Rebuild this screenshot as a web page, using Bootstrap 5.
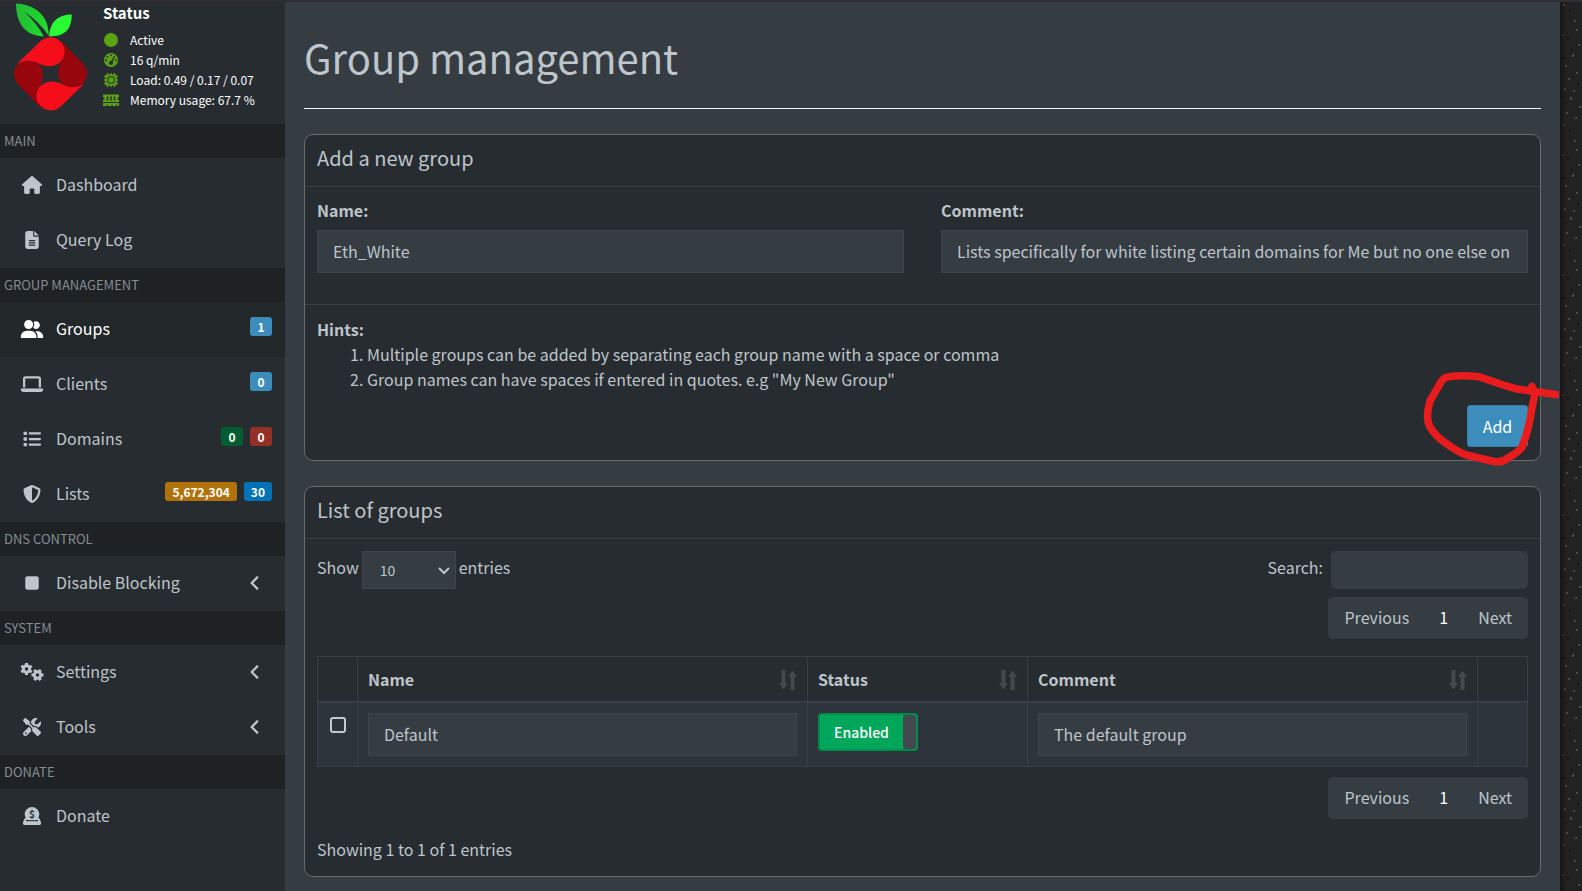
<!DOCTYPE html>
<html lang="en">
<head>
<meta charset="utf-8">
<meta name="viewport" content="width=device-width, initial-scale=1">
<title>Group management</title>
<link href="https://cdn.jsdelivr.net/npm/bootstrap@5.3.0/dist/css/bootstrap.min.css" rel="stylesheet">
<style>
:root{--panel:#272c30;--page:#353c42;--ink:#bec5cb;--line:#393f44;--blue:#3c8dbc}
body{font-family:"Noto Sans CJK SC","Source Sans Pro",sans-serif;font-size:16px;line-height:25px;color:var(--ink);background:var(--page);border-top:2px solid #2f2f33}
a{color:inherit;text-decoration:none}
.shell{min-height:calc(100vh - 2px)}
.side{width:285px;flex:none;background:var(--panel)}
.texture{width:22px;flex:none;background-color:#222;box-shadow:inset 5px 0 5px -3px #111;
background-image:url("data:image/svg+xml,%3Csvg xmlns='http://www.w3.org/2000/svg' width='22' height='120'%3E%3Cg fill='%234a4a4a'%3E%3Cpath d='M3 2h2v2h-2zM14 18h2v2h-2zM16 27h2v2h-2zM2 32h2v2h-2zM18 42h2v2h-2zM12 52h2v3h-2zM5 63h2v2h-2zM16 70h2v2h-2zM8 76h2v2h-2zM4 86h2v2h-2zM13 88h2v2h-2zM10 95h2v3h-2zM19 104h2v2h-2zM6 110h2v2h-2zM15 115h2v2h-2z'/%3E%3C/g%3E%3Cg fill='%23161616'%3E%3Cpath d='M9 8h2v2h-2zM7 36h2v2h-2zM11 47h2v2h-2zM3 55h2v2h-2zM17 81h2v2h-2zM5 100h2v2h-2z'/%3E%3C/g%3E%3C/svg%3E")}
.user-panel{height:122px;padding-left:14px;color:#fff}
.user-panel .brand{width:73px;height:108px;margin:1px 16px 0 0;flex:none}
.status-title{font-weight:700;font-size:15px;line-height:22px;margin-bottom:6px}
.status-row{font-size:12px;line-height:20px;gap:10px}
.status-row svg{width:17px;height:16px;fill:#5ba313;flex:none}
.sect{height:34px;line-height:34px;padding-left:4px;font-size:13px;background:#1e2225;color:#858d91}
.side-link{height:55px;padding:0 13px 2px 20px}
.side-link .ico{width:24px;height:18px;flex:none;margin-right:12px;fill:currentColor}
.side-link .chev{width:12px;height:18px;margin-right:11px;fill:currentColor}
.side-link.current{background:#22272a;color:#fff}
.tags{gap:7px;padding-bottom:4px}
.tags .badge{font-size:12px;line-height:19px;padding:0 7px;min-width:22px;border-radius:3px;font-weight:700}
.main{padding:0 19px 10px;min-width:0}
.page-title{font-size:40px;line-height:50px;font-weight:400;margin:0;padding:30px 0 26px;border-bottom:1px solid #f4f4f4}
.panel{background:var(--panel);border:1px solid #6a6a6a;border-radius:9px;margin-top:25px}
.panel-title{font-size:20px;line-height:25px;font-weight:400;margin:0;padding:10px 12px 16px;border-bottom:1px solid var(--line)}
.panel-part{padding:12px 12px 14px}
.pair{display:grid;grid-template-columns:1fr 1fr;gap:37px;padding:11px 12px 31px}
.form-label{font-weight:700;margin-bottom:7px;display:block}
.field,.field:focus{background:var(--page);color:var(--ink);border:1px solid #3e444c;border-radius:0;height:43px;padding:5px 15px 7px;font-size:16px;line-height:25px}
.hints{border-top:1px solid var(--line);padding:12px 12px 13px}
.hints ol{padding-left:50px;margin:0 0 13px}
.btn-add{width:61px;height:42px;padding:0;background:var(--blue);border:1px solid #367fa9;border-radius:3px;color:#fff;font-size:16px}
.scribble{position:absolute;right:-31px;top:-36px;width:140px;height:100px;pointer-events:none}
.inline{gap:3px}
.length,.length:focus{width:94px;height:38px;padding:0 17px;font-size:14px;background-color:var(--page);color:var(--ink);border:1px solid #3e444c;border-radius:0;background-size:14px;background-position:right 4px center;
background-image:url("data:image/svg+xml,%3Csvg xmlns='http://www.w3.org/2000/svg' viewBox='0 0 14 14'%3E%3Cpath d='M2 5l5 5 5-5' fill='none' stroke='%23bec5cb' stroke-width='2'/%3E%3C/svg%3E")}
.find,.find:focus{width:197px;height:38px;background:var(--page);color:var(--ink);border:0;border-radius:5px}
.pages{background:var(--page);border-radius:5px;margin:0}
.pages .page-link{background:none;border:0;color:var(--ink);padding:8px 16px 9px;line-height:25px;font-size:16px}
.pages .active .page-link{color:#fff;padding-left:15px;padding-right:15px}
.groups{table-layout:fixed;margin:17px 0 10px;color:var(--ink);border-color:var(--line);--bs-table-bg:transparent;--bs-table-color:#bec5cb}
.groups th,.groups td{border:1px solid var(--line);padding:10px;vertical-align:top}
.groups th{border-bottom-width:2px;padding-bottom:9px}
.groups tbody td{background:#2d343b}
.c-check{width:40px}.c-status{width:220px}.c-action{width:50px}
.sorter{width:18px;height:20px;fill:#44494e}
.tick{appearance:none;width:16px;height:16px;border:2px solid #c3cad0;border-radius:3px;background:none;display:block;margin:4px auto 0;padding:0}
.toggle-on{width:100px;height:38px;border:2px solid #008d4c;border-radius:4px;background:#00a65a;color:#fff;font-size:14px;font-weight:500;padding:0;overflow:hidden;display:flex}
.toggle-on span{flex:1;line-height:34px}
.toggle-on i{width:13px;height:34px;background:#42484d;border-radius:3px}
.summary{margin-top:18px}
</style>
</head>
<body>
<div class="shell d-flex">
<aside class="side">
<div class="user-panel d-flex">
<svg class="brand" viewBox="42 8 220 324" aria-hidden="true">
<defs><linearGradient id="leafA"><stop offset="0" stop-color="#2b3"/><stop offset="1" stop-color="#1fdd2c"/></linearGradient>
<path id="petal" d="M50 192L118 126C138 106 164 106 182 124C199 142 198 166 184 183C168 200 142 202 121 192C98 178 74 177 50 192z"/></defs>
<path fill="url(#leafA)" d="M48 9C104 12 147 44 147 106Q116 62 72 33Q112 70 132 108C74 107 48 66 48 9z"/>
<path fill="#2bfb34" d="M216 42C216 88 194 108 148 108C149 72 168 42 216 42z"/>
<g fill="#96060c"><use href="#petal" transform="rotate(90 152 221)"/><use href="#petal" transform="rotate(270 152 221)"/></g>
<g fill="#f60d1a"><use href="#petal"/><use href="#petal" transform="rotate(180 152 221)"/></g>
</svg>
<div>
<div class="status-title">Status</div>
<div class="status-row d-flex align-items-center"><svg viewBox="0 0 17 16"><circle cx="8" cy="8" r="7"/></svg>Active</div>
<div class="status-row d-flex align-items-center"><svg viewBox="0 0 17 16"><circle cx="8" cy="8" r="7"/><g fill="#272c30"><circle cx="8" cy="3.2" r="1"/><circle cx="4.4" cy="4.8" r="1"/><circle cx="3.2" cy="8.3" r="1"/><circle cx="12.8" cy="8.3" r="1"/><circle cx="8" cy="11" r="2"/></g><path d="M8 11l3.6-6.6" stroke="#272c30" stroke-width="1.4"/></svg>16 q/min</div>
<div class="status-row d-flex align-items-center"><svg viewBox="0 0 17 16"><path d="M4.500 1v14M8 1v14M11.500 1v14M1 4.500h14M1 8h14M1 11.500h14" stroke="#5ba313" stroke-width="1.400"/><rect x="2.500" y="2.500" width="11" height="11" rx="1.500"/><rect x="5" y="5" width="6" height="6" fill="none" stroke="#272c30"/></svg>Load: 0.49 / 0.17 / 0.07</div>
<div class="status-row d-flex align-items-center"><svg viewBox="0 0 17 16"><path d="M0 2.500h16v2.500a1.500 1.500 0 0 0 0 3V10H0V8a1.500 1.500 0 0 0 0-3zM0 11h16v3h-2v-1.500h-1V14H9.500v-1.500h-1V14H5v-1.500H4V14H0z"/><path d="M4.500 4.500v4M8 4.500v4M11.500 4.500v4" stroke="#272c30" stroke-width="1.500"/></svg>Memory usage: 67.7 %</div>
</div>
</div>
<nav>
<div class="sect">MAIN</div>
<a class="side-link d-flex align-items-center" href="#"><svg class="ico" viewBox="0 0 576 512"><path d="M575.8 255.5c0 18-15 32.100-32 32.100h-32l.7 160.200c0 2.700-.2 5.400-.5 8.100V472c0 22.100-17.900 40-40 40H392c-22.100 0-40-17.900-40-40V384c0-17.700-14.300-32-32-32H256c-17.700 0-32 14.300-32 32v88c0 22.100-17.900 40-40 40H104c-22.100 0-40-17.900-40-40V287.600H32c-18 0-32-14-32-32.100c0-9 3-17 10-24L266.400 8c7-7 15-8 22-8s15 2 21 7L564.800 231.500c8 7 12 15 11 24z"/></svg>Dashboard</a>
<a class="side-link d-flex align-items-center" href="#"><svg class="ico" viewBox="0 0 384 512"><path fill-rule="evenodd" d="M64 0C28.700 0 0 28.700 0 64V448c0 35.300 28.700 64 64 64H320c35.300 0 64-28.700 64-64V160H256c-17.700 0-32-14.300-32-32V0H64zM256 0V128H384L256 0zM112 256H272c8.800 0 16 7.200 16 16s-7.200 16-16 16H112c-8.800 0-16-7.200-16-16s7.200-16 16-16zm0 64H272c8.800 0 16 7.200 16 16s-7.200 16-16 16H112c-8.800 0-16-7.200-16-16s7.200-16 16-16zm0 64H272c8.800 0 16 7.200 16 16s-7.200 16-16 16H112c-8.800 0-16-7.200-16-16s7.200-16 16-16z"/></svg>Query Log</a>
<div class="sect">GROUP MANAGEMENT</div>
<a class="side-link current d-flex align-items-center" href="#" aria-current="page"><svg class="ico" viewBox="0 0 640 512"><path d="M96 128a128 128 0 1 1 256 0A128 128 0 1 1 96 128zM0 482.300C0 383.800 79.800 304 178.300 304h91.400C368.200 304 448 383.800 448 482.300c0 16.400-13.300 29.700-29.700 29.700H29.700C13.300 512 0 498.700 0 482.300zM609.300 512H471.400c5.400-9.400 8.600-20.300 8.600-32v-8c0-60.700-27.100-115.200-69.800-151.800c2.400-.1 4.700-.2 7.100-.2h61.400C567.800 320 640 392.200 640 481.300c0 17-13.800 30.700-30.700 30.700zM432 256c-31 0-59-12.600-79.300-32.900C372.400 196.500 384 163.600 384 128c0-26.800-6.600-52.100-18.300-74.300C384.300 40.100 407.200 32 432 32c61.900 0 112 50.100 112 112s-50.100 112-112 112z"/></svg>Groups<span class="tags d-flex ms-auto"><span class="badge" style="background:#3c8dbc">1</span></span></a>
<a class="side-link d-flex align-items-center" href="#"><svg class="ico" viewBox="0 0 640 512"><path d="M128 32C92.700 32 64 60.700 64 96V352h64V96H512V352h64V96c0-35.300-28.700-64-64-64H128zM19.200 384C8.600 384 0 392.600 0 403.200C0 445.600 34.400 480 76.800 480H563.200c42.400 0 76.800-34.400 76.800-76.800c0-10.600-8.600-19.200-19.200-19.200H19.200z"/></svg>Clients<span class="tags d-flex ms-auto"><span class="badge" style="background:#3c8dbc">0</span></span></a>
<a class="side-link d-flex align-items-center" href="#"><svg class="ico" viewBox="0 0 512 512"><g id="row1"><rect x="16" y="48" width="96" height="96" rx="24"/><rect x="160" y="64" width="352" height="64" rx="32"/></g><use href="#row1" y="160"/><use href="#row1" y="320"/></svg>Domains<span class="tags d-flex ms-auto"><span class="badge" style="background:#005c32">0</span><span class="badge" style="background:#932f24">0</span></span></a>
<a class="side-link d-flex align-items-center" href="#"><svg class="ico" viewBox="0 0 512 512"><path fill-rule="evenodd" d="M256 0c4.600 0 9.200 1 13.400 2.900L457.700 82.800c22 9.300 38.400 31 38.300 57.200c-.5 99.200-41.300 280.700-213.600 363.200c-16.700 8-36.100 8-52.800 0C57.300 420.700 16.500 239.200 16 140c-.1-26.200 16.300-47.900 38.300-57.200L242.700 2.900C246.800 1 251.400 0 256 0zm0 66.800V444.800C394 378 431.100 230.100 432 141.400L256 66.800z"/></svg>Lists<span class="tags d-flex ms-auto"><span class="badge" style="background:#b1720c">5,672,304</span><span class="badge" style="background:#0073b7">30</span></span></a>
<div class="sect">DNS CONTROL</div>
<a class="side-link d-flex align-items-center" href="#"><svg class="ico" viewBox="0 0 384 512"><rect y="64" width="384" height="384" rx="64"/></svg>Disable Blocking<svg class="chev ms-auto" viewBox="0 0 320 512"><path id="chevron" d="M41.400 233.400c-12.500 12.500-12.500 32.800 0 45.300l160 160c12.500 12.500 32.800 12.500 45.300 0s12.500-32.800 0-45.300L109.300 256 246.600 118.600c12.500-12.500 12.500-32.800 0-45.300s-32.800-12.500-45.300 0z"/></svg></a>
<div class="sect">SYSTEM</div>
<a class="side-link d-flex align-items-center" href="#"><svg class="ico" viewBox="0 0 24 18"><g id="gear"><circle cx="6.500" cy="6" r="3.200" fill="none" stroke="currentColor" stroke-width="2.900"/><path d="M6.500 0v3M6.500 9v3M1.300 3l2.600 1.500M9.100 7.500L11.700 9M1.300 9l2.600-1.500M9.100 4.500L11.700 3" stroke="currentColor" stroke-width="3"/></g><use href="#gear" transform="translate(23.500 5.500) rotate(90)"/></svg>Settings<svg class="chev ms-auto" viewBox="0 0 320 512"><use href="#chevron"/></svg></a>
<a class="side-link d-flex align-items-center" href="#"><svg class="ico" viewBox="0 0 512 512"><path d="M78.600 5C69.100-2.400 55.600-1.500 47 7L7 47c-8.500 8.500-9.400 22-2.100 31.600l80 104c4.500 5.900 11.600 9.400 19 9.400h54.100l109 109c-14.700 29-10 65.400 14.300 89.600l112 112c12.500 12.500 32.800 12.500 45.300 0l64-64c12.500-12.500 12.500-32.800 0-45.300l-112-112c-24.200-24.200-60.600-29-89.600-14.300l-109-109V104c0-7.500-3.500-14.500-9.400-19L78.600 5zM19.900 396.100C7.200 408.800 0 426.100 0 444.100C0 481.600 30.400 512 67.900 512c18 0 35.300-7.200 48-19.900L233.700 374.300c-7.800-20.900-9-43.600-3.600-65.100l-61.700-61.700L19.900 396.100zM512 144c0-10.500-1.100-20.700-3.200-30.500c-2.400-11.200-16.100-14.100-24.200-6l-63.900 63.900c-3 3-7.100 4.700-11.300 4.700H352c-8.800 0-16-7.200-16-16V102.600c0-4.200 1.700-8.300 4.700-11.300l63.900-63.900c8.100-8.100 5.200-21.800-6-24.200C388.700 1.100 378.500 0 368 0C288.500 0 224 64.500 224 144l0 .8 85.300 85.300c36-9.100 75.800 .5 104 28.700L429 274.500c49-23 83-72.800 83-130.500z"/><circle cx="80" cy="432" r="24" fill="#272c30"/></svg>Tools<svg class="chev ms-auto" viewBox="0 0 320 512"><use href="#chevron"/></svg></a>
<div class="sect">DONATE</div>
<a class="side-link d-flex align-items-center" href="#"><svg class="ico" viewBox="0 0 18 18"><path d="M2 11h2v2H3v1h12v-1h-1v-2h2l2 4v1.500a1.500 1.500 0 0 1-1.500 1.500h-15A1.500 1.500 0 0 1 0 16.500V15z"/><circle cx="9" cy="7.300" r="7.300"/><path d="M3 13.700h12" stroke="#272c30"/><text x="9" y="11" text-anchor="middle" font-size="10" font-weight="700" fill="#272c30">$</text></svg>Donate</a>
</nav>
</aside>
<main class="main flex-grow-1">
<h1 class="page-title">Group management</h1>
<section class="panel">
<h2 class="panel-title">Add a new group</h2>
<form>
<div class="pair">
<div><label class="form-label" for="gname">Name:</label><input class="form-control field" id="gname" value="Eth_White"></div>
<div><label class="form-label" for="gcomment">Comment:</label><input class="form-control field" id="gcomment" value="Lists specifically for white listing certain domains for Me but no one else on the network"></div>
</div>
<div class="hints"><strong>Hints:</strong>
<ol><li>Multiple groups can be added by separating each group name with a space or comma</li><li>Group names can have spaces if entered in quotes. e.g "My New Group"</li></ol>
<div class="d-flex justify-content-end"><div class="position-relative"><button class="btn btn-add" type="button">Add</button>
<svg class="scribble" viewBox="1419 369 140 100" aria-hidden="true"><path d="M1556 394.500L1517 389Q1505 386 1480 377Q1462 374.500 1448 377Q1444 377 1441 382L1430 401Q1425 418 1430 427Q1436 437 1447 444Q1458 452 1466 455L1494 461.500Q1502 463 1508 458Q1520 451 1522 447Q1529 430 1532 408L1535 393L1532 386.500" fill="none" stroke="#e81c1c" stroke-width="7.500" stroke-linecap="round" stroke-linejoin="round"/></svg></div></div></div>
</form>
</section>
<section class="panel">
<h2 class="panel-title">List of groups</h2>
<div class="panel-part">
<div class="d-flex justify-content-between">
<div class="d-flex inline"><label class="pt-1" for="len">Show</label><select class="form-select length" id="len"><option>10</option></select><span class="pt-1">entries</span></div>
<div class="d-flex gap-2"><label class="pt-1" for="find">Search:</label><input class="form-control find" id="find" type="search"></div>
</div>
<div class="d-flex justify-content-end mt-2"><ul class="pagination pages"><li class="page-item"><a class="page-link" href="#">Previous</a></li><li class="page-item active"><a class="page-link" href="#">1</a></li><li class="page-item"><a class="page-link" href="#">Next</a></li></ul></div>
<table class="table groups">
<colgroup><col class="c-check"><col><col class="c-status"><col><col class="c-action"></colgroup>
<thead><tr><th></th>
<th><div class="d-flex justify-content-between align-items-center">Name<svg class="sorter" viewBox="0 0 18 20"><path id="sort" d="M2.500 0h4v13H9l-4.500 6.500L0 13h2.500zM11.500 20h4V7H18L13.500.5 9 7h2.500z"/></svg></div></th>
<th><div class="d-flex justify-content-between align-items-center">Status<svg class="sorter" viewBox="0 0 18 20"><use href="#sort"/></svg></div></th>
<th><div class="d-flex justify-content-between align-items-center">Comment<svg class="sorter" viewBox="0 0 18 20"><use href="#sort"/></svg></div></th><th></th></tr></thead>
<tbody><tr><td><input class="tick" type="checkbox" aria-label="Select Default"></td>
<td><input class="form-control field" aria-label="Name" value="Default"></td>
<td><button class="toggle-on" type="button"><span>Enabled</span><i></i></button></td>
<td><input class="form-control field" aria-label="Comment" value="The default group"></td><td></td></tr></tbody>
</table>
<div class="d-flex justify-content-end"><ul class="pagination pages"><li class="page-item"><a class="page-link" href="#">Previous</a></li><li class="page-item active"><a class="page-link" href="#">1</a></li><li class="page-item"><a class="page-link" href="#">Next</a></li></ul></div>
<div class="summary">Showing 1 to 1 of 1 entries</div>
</div>
</section>
</main>
<div class="texture"></div>
</div>
<script src="https://cdn.jsdelivr.net/npm/bootstrap@5.3.0/dist/js/bootstrap.bundle.min.js"></script>
</body>
</html>
